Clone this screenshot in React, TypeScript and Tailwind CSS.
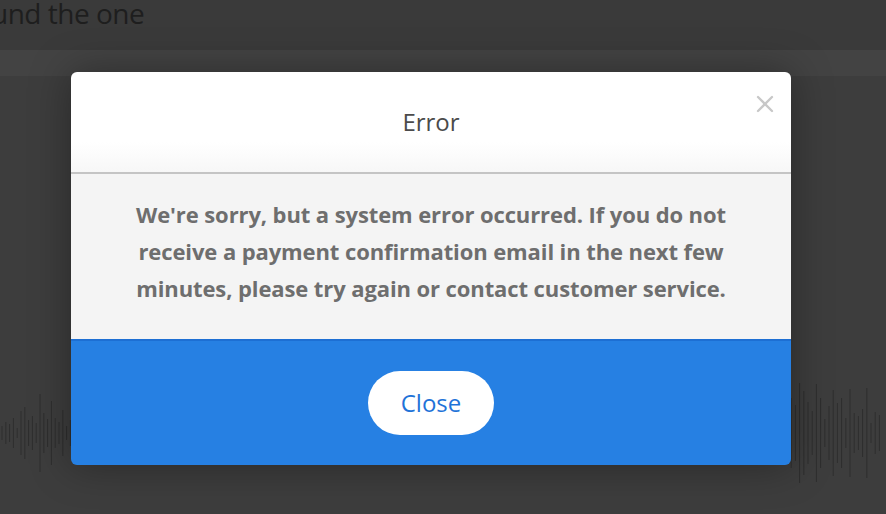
import { X } from 'lucide-react'

const left = [14, 22, 18, 30, 10, 44, 52, 26, 34, 20, 78, 40, 28, 64, 30, 22, 46, 14, 26]
const right = [40, 70, 56, 100, 84, 62, 44, 98, 70, 28, 54, 86, 60, 70, 30, 88, 40, 34, 48, 90, 20, 42, 36]

function Wave({ bars, gap }: { bars: number[]; gap: number }) {
  const h = 110
  return (
    <svg width={bars.length * gap + 4} height={h} className="block">
      {bars.map((b, i) => (
        <line
          key={i}
          x1={i * gap + 2}
          x2={i * gap + 2}
          y1={h / 2 - b / 2}
          y2={h / 2 + b / 2}
          stroke="#2e2e2e"
          strokeWidth={1}
        />
      ))}
    </svg>
  )
}

export default function App() {
  return (
    <div
      className="relative h-[514px] w-[886px] overflow-hidden bg-[#3d3d3d]"
      style={{ fontFamily: '"Open Sans", "Noto Sans", sans-serif' }}
    >
      {/* page behind the overlay */}
      <div className="flex h-[50px] items-start bg-[#3a3a3a]">
        <h2 className="-ml-[9px] -mt-[7px] text-[28px] leading-[40px] tracking-[-0.5px] text-[#1e1e1e]">und the one</h2>
      </div>
      <div className="h-[26px] bg-[#434343]" />
      <div className="mt-[302px] flex justify-between">
        <Wave bars={left} gap={3.8} />
        <Wave bars={right} gap={4.2} />
      </div>

      {/* modal */}
      <div className="absolute inset-0 flex items-start pl-[71px] pt-[72px]">
        <div className="w-[720px] overflow-hidden rounded-[6px] shadow-[0_0_40px_rgba(0,0,0,0.35)]">
          <div className="relative flex h-[102px] items-center justify-center border-b-2 border-[#c4c4c4] bg-gradient-to-b from-white from-70% to-[#f7f7f7]">
            <h1 className="text-[24px] text-[#4b4b4b]">Error</h1>
            <X className="absolute right-[12px] top-[18px] h-[28px] w-[28px] text-[#c8c8c8]" strokeWidth={2} />
          </div>
          <div className="flex h-[165px] items-start justify-center bg-[#f4f4f4] pt-[22px]">
            <p className="text-center text-[22px] font-bold leading-[37px] tracking-[-0.1px] text-[#6e6e6e]">
              We're sorry, but a system error occurred. If you do not
              <br />
              receive a payment confirmation email in the next few
              <br />
              minutes, please try again or contact customer service.
            </p>
          </div>
          <div className="flex h-[126px] items-center justify-center border-t-2 border-[#1d6fd3] bg-[#2680e3]">
            <button className="h-[64px] w-[126px] rounded-full bg-white text-[24px] text-[#1f73d8]">Close</button>
          </div>
        </div>
      </div>
    </div>
  )
}
